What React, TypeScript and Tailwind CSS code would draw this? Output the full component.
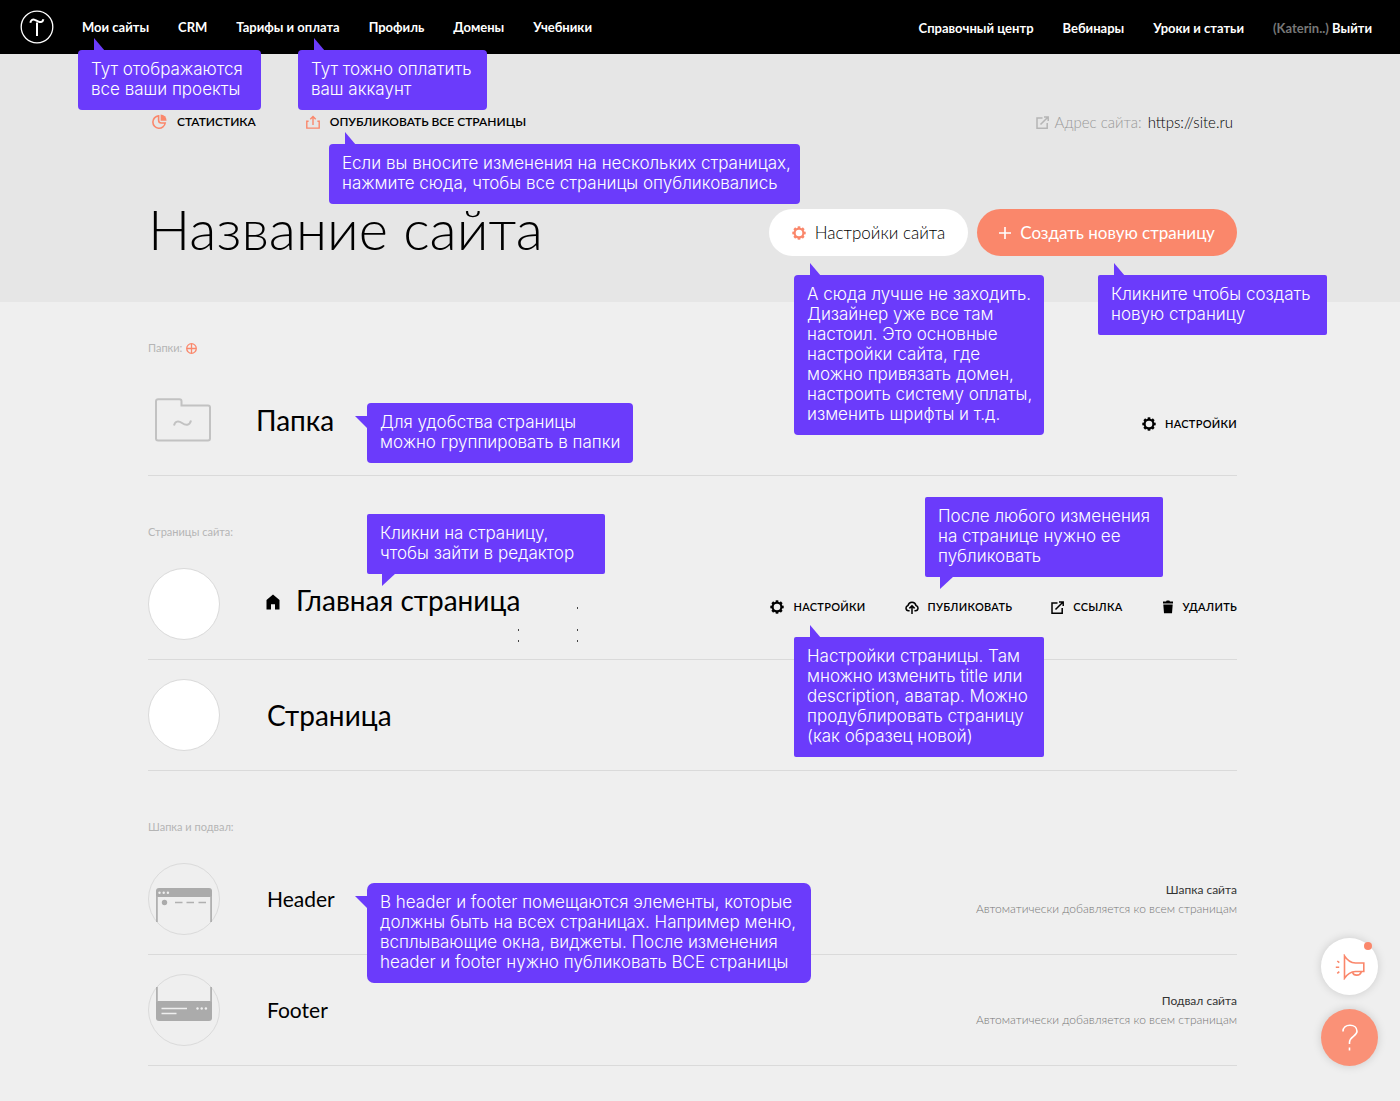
import React from "react";
import clsx from "clsx";

type TipProps = {
  lines: string[];
  tail: "top" | "bottom" | "left";
  className: string;
};

const NAV = ["Мои сайты", "CRM", "Тарифы и оплата", "Профиль", "Домены", "Учебники"];
const HELP = ["Справочный центр", "Вебинары", "Уроки и статьи"];

/* ------------------------ ICONS ------------------------ */

function Logo() {
  return (
    <svg width="34" height="34" viewBox="0 0 34 34" fill="none" stroke="#fff">
      <circle cx="17" cy="17" r="15.8" strokeWidth="1.3" />
      <path d="M17 12.5V26" strokeWidth="2" />
      <path d="M10.3 12.8c.6-3.2 2.6-3.9 4.6-2.9l3.6 1.7c2.2 1 4.2.6 4.9-2.3" strokeWidth="2" />
    </svg>
  );
}

function Gear({ className }: { className?: string }) {
  return (
    <svg width="14" height="14" viewBox="0 0 14 14" className={className} fill="none" stroke="currentColor">
      <circle cx="7" cy="7" r="4.4" strokeWidth="2.2" />
      {[0, 45, 90, 135, 180, 225, 270, 315].map((a) => (
        <path key={a} d="M7 2.2V.3" strokeWidth="2.6" transform={`rotate(${a} 7 7)`} />
      ))}
    </svg>
  );
}

function PieIcon() {
  return (
    <svg width="15" height="16" viewBox="0 0 15 16" fill="none" className="text-[#fa876b]">
      <path d="M6.6 1.9A6.2 6.2 0 1 0 13.2 9H9.4A2.8 2.8 0 0 1 6.6 6.2z" stroke="currentColor" strokeWidth="1.6" />
      <path d="M8.6.5A6 6 0 0 1 14.6 6.7H8.6z" fill="currentColor" />
    </svg>
  );
}

function UploadIcon() {
  return (
    <svg width="14" height="14" viewBox="0 0 14 14" fill="none" stroke="#fa876b" strokeWidth="1.4">
      <path d="M2.6 6.2H.8v6.9h12.4V6.2h-1.8" />
      <path d="M7 10V1.5M4.3 4.2 7 1.4l2.7 2.8" />
    </svg>
  );
}

function ExternalIcon({ className }: { className?: string }) {
  return (
    <svg width="13" height="13" viewBox="0 0 13 13" fill="none" stroke="currentColor" strokeWidth="1.5" className={className}>
      <path d="M6.5 2H1v10.2h10.2V7" />
      <path d="M4.5 8.5 11.8 1.2M8 .9h4.2v4.2" />
    </svg>
  );
}

function CloudUpIcon() {
  return (
    <svg width="14" height="14" viewBox="0 0 14 14" fill="none" stroke="currentColor" strokeWidth="1.5">
      <path d="M4.6 10.8H3.5a2.7 2.7 0 0 1-.5-5.3 4.1 4.1 0 0 1 8 0 2.7 2.7 0 0 1-.5 5.3H9.4" />
      <path d="M7 14V6M4.4 8.4 7 5.8l2.6 2.6" />
    </svg>
  );
}

function TrashIcon() {
  return (
    <svg width="12" height="14" viewBox="0 0 12 14" fill="currentColor">
      <path d="M1 1.5h3L4.7.5h2.6l.7 1h3v1.9H1zM1.3 4.6h9.4L10 13.3H2z" />
    </svg>
  );
}

function HomeIcon() {
  return (
    <svg width="14" height="16" viewBox="0 0 14 16">
      <path d="M7 .5 13.5 6v9.5H9v-5.3H5v5.3H.5V6z" />
    </svg>
  );
}

function FolderIcon() {
  return (
    <svg width="56" height="44" viewBox="0 0 56 44" fill="none" stroke="#c2c2c2" strokeWidth="2">
      <path d="M3 1.2h21.5a2 2 0 0 1 2 2v4.3H53a2 2 0 0 1 2 2v31a2 2 0 0 1-2 2H3a2 2 0 0 1-2-2V3.2a2 2 0 0 1 2-2z" />
      <path d="M19 27.5c1-4.5 4.5-5 8-2.5s7.5 3 9-2.5" />
    </svg>
  );
}

function HeaderThumb() {
  return (
    <svg width="72" height="72" viewBox="0 0 72 72" fill="none">
      <circle cx="36" cy="36" r="35.5" stroke="#dadada" />
      <path d="M8 28a3 3 0 0 1 3-3h50a3 3 0 0 1 3 3v6H8z" fill="#ababab" />
      <path d="M8.9 33v26M63.1 33v26" stroke="#b0b0b0" strokeWidth="1.8" />
      <g fill="#efefef">
        <circle cx="11.5" cy="29.7" r="1.2" />
        <circle cx="15.7" cy="29.7" r="1.2" />
        <circle cx="19.9" cy="29.7" r="1.2" />
      </g>
      <circle cx="16.5" cy="39.5" r="2.7" fill="#ababab" />
      <path d="M27 39.5h7.5M38.5 39.5H46M50.5 39.5H58" stroke="#b0b0b0" strokeWidth="1.3" />
    </svg>
  );
}

function FooterThumb() {
  return (
    <svg width="72" height="72" viewBox="0 0 72 72" fill="none">
      <circle cx="36" cy="36" r="35.5" stroke="#dadada" />
      <path d="M8 27h56v17a3 3 0 0 1-3 3H11a3 3 0 0 1-3-3z" fill="#ababab" />
      <path d="M8.9 28V13M63.1 28V13" stroke="#b0b0b0" strokeWidth="1.8" />
      <path d="M13.5 34.5H39M13.5 39.5h15" stroke="#efefef" strokeWidth="1.3" />
      <g fill="#efefef">
        <circle cx="49.5" cy="34.5" r="1.2" />
        <circle cx="53.7" cy="34.5" r="1.2" />
        <circle cx="57.9" cy="34.5" r="1.2" />
      </g>
    </svg>
  );
}

function MegaphoneIcon() {
  return (
    <svg width="30" height="26" viewBox="0 0 30 26" fill="none" stroke="#fa876b" strokeWidth="1.6">
      <path d="M9.5 1.8v22.4c2.500-3.600 6.500-6.400 11-6.700h8.300V9h-8.300C16 8.700 12 6 9.500 1.800z" />
      <path d="M17.5 18.2c1.2 4 7.500 4 8.800-.5" />
      <path d="M.8 13.200h3.400M2.300 7l2 1.700M2.300 19.400l2-1.700" />
    </svg>
  );
}

/* ------------------------ PIECES ------------------------ */

function Tip({ lines, tail, className }: TipProps) {
  return (
    <div
      className={clsx(
        "absolute z-20 bg-[#6b3bfb] px-[13px] pt-[9px] pb-[11px] font-['Inter',sans-serif] text-[17px] leading-5 font-light whitespace-nowrap text-white",
        className
      )}
    >
      {tail === "top" && (
        <svg className="absolute -top-3 left-4" width="12" height="13" viewBox="0 0 12 13" fill="#6b3bfb">
          <path d="M0 0v13h11z" />
        </svg>
      )}
      {tail === "bottom" && (
        <svg className="absolute -bottom-3 left-[15px]" width="14" height="13" viewBox="0 0 14 13" fill="#6b3bfb">
          <path d="M0 0v13L14 0z" />
        </svg>
      )}
      {tail === "left" && (
        <svg className="absolute top-[13px] -left-3" width="13" height="13" viewBox="0 0 13 13" fill="#6b3bfb">
          <path d="M0 0h13v13z" />
        </svg>
      )}
      {lines.map((line) => (
        <p key={line}>{line}</p>
      ))}
    </div>
  );
}

function Action({ icon, children }: { icon: React.ReactNode; children: string }) {
  return (
    <button className="flex items-center gap-[9px] text-[11px] leading-4 font-semibold tracking-wide">
      {icon}
      {children}
    </button>
  );
}

function Row({ children }: { children: React.ReactNode }) {
  return <div className="flex h-[111px] items-center border-b border-[#dadada]">{children}</div>;
}

function SectionLabel({ children }: { children: React.ReactNode }) {
  return <h2 className="mb-[9px] flex items-center gap-1 text-[11px] leading-4 text-[#b5b5b5]">{children}</h2>;
}

/* ------------------------ PAGE ------------------------ */

export default function App() {
  return (
    <div className="min-h-screen bg-[#efefef] font-['Lato',sans-serif] text-black">
      <header className="relative flex h-[54px] items-center bg-black pr-7 pl-5 text-[13px] font-bold text-white">
        <a href="#" aria-label="Tilda">
          <Logo />
        </a>
        <nav className="ml-7 flex gap-[29px] pt-[2px]">
          {NAV.map((label) => (
            <a key={label} href="#">
              {label}
            </a>
          ))}
        </nav>
        <nav className="ml-auto flex gap-[29px] pt-1">
          {HELP.map((label) => (
            <a key={label} href="#">
              {label}
            </a>
          ))}
          <a href="#">
            <span className="text-[#777]">(Katerin..)</span> Выйти
          </a>
        </nav>
        <Tip tail="top" className="top-[50px] left-[78px] w-[183px] rounded-[4px]" lines={["Тут отображаются", "все ваши проекты"]} />
        <Tip tail="top" className="top-[50px] left-[298px] w-[189px] rounded-[4px]" lines={["Тут тожно оплатить", "ваш аккаунт"]} />
      </header>

      <div className="bg-[#e6e6e6] pr-[15px]">
        <div className="relative mx-auto flex h-[248px] max-w-[1089px] flex-col pt-[58px]">
          <div className="flex h-5 items-center pl-1 text-[12px] font-semibold">
            <button className="flex items-center gap-[10px]">
              <PieIcon />
              СТАТИСТИКА
            </button>
            <button className="ml-[50px] flex items-center gap-[10px]">
              <UploadIcon />
              ОПУБЛИКОВАТЬ ВСЕ СТРАНИЦЫ
            </button>
            <div className="ml-auto flex items-center gap-[6px] pr-1 text-[15px] font-light">
              <ExternalIcon className="text-[#b5b5b5]" />
              <span className="text-[#999]">Адрес сайта:</span>
              <a href="#">https://site.ru</a>
            </div>
          </div>
          <div className="mt-[63px] flex items-center">
            <h1 className="text-[56px] leading-[68px] font-light">Название сайта</h1>
            <button className="mt-[6px] ml-auto flex h-[47px] w-[199px] items-center justify-center gap-[9px] rounded-full bg-white pt-[2px] text-[17px] font-light">
              <Gear className="text-[#fa876b]" />
              Настройки сайта
            </button>
            <button className="mt-[6px] ml-[9px] flex h-[47px] w-[260px] items-center justify-center gap-[9px] rounded-full bg-[#fa876b] pt-[2px] text-[17px] text-white">
              <svg width="12" height="12" viewBox="0 0 12 12" stroke="#fff" strokeWidth="1.6">
                <path d="M6 0v12M0 6h12" />
              </svg>
              Создать новую страницу
            </button>
          </div>
          <Tip
            tail="top"
            className="top-[90px] left-[181px] w-[471px] rounded-[4px]"
            lines={["Если вы вносите изменения на нескольких страницах,", "нажмите сюда, чтобы все страницы опубликовались"]}
          />
          <Tip
            tail="top"
            className="top-[221px] right-[193px] w-[250px] rounded-[4px]"
            lines={[
              "А сюда лучше не заходить.",
              "Дизайнер уже все там",
              "настоил. Это основные",
              "настройки сайта, где",
              "можно привязать домен,",
              "настроить систему оплаты,",
              "изменить шрифты и т.д.",
            ]}
          />
          <Tip tail="top" className="top-[221px] -right-[90px] w-[229px] rounded-[2px]" lines={["Кликните чтобы создать", "новую страницу"]} />
        </div>
      </div>

      <main className="pr-[15px]">
        <div className="mx-auto max-w-[1089px]">
          <section className="relative pt-[38px]">
            <SectionLabel>
              Папки:
              <svg width="11" height="11" viewBox="0 0 11 11" fill="none" stroke="#fa876b" strokeWidth="1.3">
                <circle cx="5.5" cy="5.5" r="4.8" />
                <path d="M5.5 1v9M1 5.5h9" />
              </svg>
            </SectionLabel>
            <Row>
              <div className="mr-9 flex w-[72px] pl-[7px]">
                <FolderIcon />
              </div>
              <h3 className="text-[28px]">Папка</h3>
              <div className="ml-auto pt-2">
                <Action icon={<Gear />}>НАСТРОЙКИ</Action>
              </div>
            </Row>
            <Tip tail="left" className="top-[101px] left-[219px] w-[266px] rounded-[4px]" lines={["Для удобства страницы", "можно группировать в папки"]} />
          </section>

          <section className="relative pt-12">
            <SectionLabel>Страницы сайта:</SectionLabel>
            <Row>
              <div className="mr-[46px] size-[72px] rounded-full border border-[#dadada] bg-white" />
              <div className="flex items-center gap-4 pb-1">
                <HomeIcon />
                <h3 className="pb-1 text-[28px]">Главная страница</h3>
              </div>
              <div className="ml-auto flex gap-[39px] pt-[6px]">
                <Action icon={<Gear />}>НАСТРОЙКИ</Action>
                <Action icon={<CloudUpIcon />}>ПУБЛИКОВАТЬ</Action>
                <Action icon={<ExternalIcon />}>ССЫЛКА</Action>
                <Action icon={<TrashIcon />}>УДАЛИТЬ</Action>
              </div>
            </Row>
            <Row>
              <div className="mr-[47px] size-[72px] rounded-full border border-[#dadada] bg-white" />
              <h3 className="text-[28px]">Страница</h3>
            </Row>
            <svg className="absolute top-[131px] left-[369px]" width="62" height="36" viewBox="0 0 62 36" fill="#444">
              <path d="M60 0h1v2h-1zM1 22h1v2H1zM1 33h1v2H1zM60 22h1v2h-1zM60 33h1v2h-1z" />
            </svg>
            <Tip tail="bottom" className="top-[38px] left-[219px] w-[238px] rounded-[2px]" lines={["Кликни на страницу,", "чтобы зайти в редактор"]} />
            <Tip tail="bottom" className="top-[21px] right-[74px] w-[238px] rounded-[2px]" lines={["После любого изменения", "на странице нужно ее", "публиковать"]} />
            <Tip
              tail="top"
              className="top-[161px] right-[193px] w-[250px] rounded-[2px]"
              lines={["Настройки страницы. Там", "множно изменить title или", "description, аватар. Можно", "продублировать страницу", "(как образец новой)"]}
            />
          </section>

          <section className="relative pt-12">
            <SectionLabel>Шапка и подвал:</SectionLabel>
            <Row>
              <HeaderThumb />
              <h3 className="ml-[47px] text-[21px]">Header</h3>
              <div className="ml-auto text-right text-[12px] leading-[19px]">
                <p className="text-[#333]">Шапка сайта</p>
                <p className="font-light text-[#777]">Автоматически добавляется ко всем страницам</p>
              </div>
            </Row>
            <Row>
              <FooterThumb />
              <h3 className="ml-[47px] text-[21px]">Footer</h3>
              <div className="ml-auto text-right text-[12px] leading-[19px]">
                <p className="text-[#333]">Подвал сайта</p>
                <p className="font-light text-[#777]">Автоматически добавляется ко всем страницам</p>
              </div>
            </Row>
            <Tip
              tail="left"
              className="top-[112px] left-[219px] w-[444px] rounded-[7px]"
              lines={[
                "В header и footer помещаются элементы, которые",
                "должны быть на всех страницах. Например меню,",
                "всплывающие окна, виджеты. После изменения",
                "header и footer нужно публиковать ВСЕ страницы",
              ]}
            />
          </section>
        </div>
      </main>

      <div className="fixed right-[22px] bottom-[35px] z-30 flex flex-col gap-[14px]">
        <button aria-label="Новости" className="relative flex size-[57px] items-center justify-center rounded-full bg-white shadow-[0_0_10px_rgba(0,0,0,0.15)]">
          <MegaphoneIcon />
          <span className="absolute top-1 right-[6px] size-2 rounded-full bg-[#fa876b]" />
        </button>
        <button aria-label="Помощь" className="flex size-[57px] items-center justify-center rounded-full bg-[#fa9177] shadow-[0_0_10px_rgba(0,0,0,0.15)]">
          <svg width="18" height="28" viewBox="0 0 18 28" fill="none" stroke="#fff" strokeWidth="1.6">
            <path d="M2 7.5C2 3.5 5 1.2 9 1.2s7 2.3 7 6c0 5-7.5 5.3-7.5 11V20M8.5 23.5v3" />
          </svg>
        </button>
      </div>
    </div>
  );
}
